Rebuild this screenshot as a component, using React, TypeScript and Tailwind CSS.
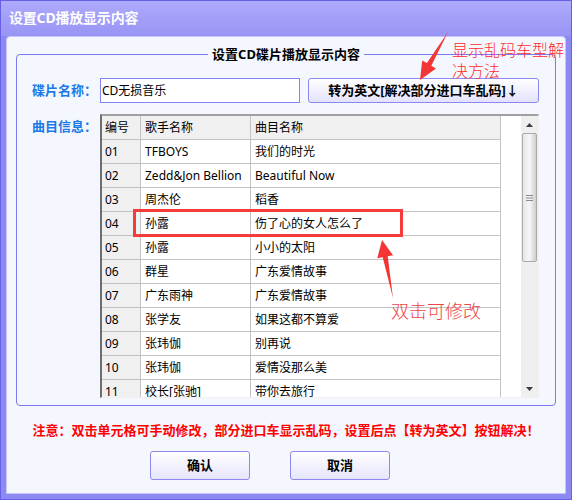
import React from "react";

const rows: [string, string, string][] = [
  ["01", "TFBOYS", "我们的时光"],
  ["02", "Zedd&Jon Bellion", "Beautiful Now"],
  ["03", "周杰伦", "稻香"],
  ["04", "孙露", "伤了心的女人怎么了"],
  ["05", "孙露", "小小的太阳"],
  ["06", "群星", "广东爱情故事"],
  ["07", "广东雨神", "广东爱情故事"],
  ["08", "张学友", "如果这都不算爱"],
  ["09", "张玮伽", "别再说"],
  ["10", "张玮伽", "爱情没那么美"],
  ["11", "校长[张驰]", "带你去旅行"],
];

function Row({ a, b, c, header }: { a: string; b: string; c: string; header?: boolean }) {
  const bg = header ? "bg-[#f0f0f0]" : "bg-white";
  return (
    <div className="flex h-[24px] shrink-0">
      <div className="w-[39px] shrink-0 bg-[#f0f0f0] border-r border-b border-[#c3c3c3] pl-[3px] flex items-center">
        {a}
      </div>
      <div className={`w-[110px] shrink-0 ${bg} border-r border-b border-[#c3c3c3] pl-[4px] flex items-center whitespace-nowrap overflow-hidden`}>
        {b}
      </div>
      <div className={`w-[250px] shrink-0 ${bg} border-r border-b border-[#c3c3c3] pl-[4px] flex items-center whitespace-nowrap`}>
        {c}
      </div>
    </div>
  );
}

export default function App() {
  return (
    <div className="relative w-[572px] h-[500px] overflow-hidden font-['Noto_Sans','Noto_Sans_CJK_SC',sans-serif]">
      <div className="w-full h-full flex flex-col bg-[#8d89f3] border border-[#6561e6]">
        {/* title bar */}
        <div className="h-[35px] shrink-0 bg-gradient-to-b from-[#aeaafc] to-[#9894f4] flex items-center pl-[8px] pb-[2px]">
          <span className="text-white font-bold text-[14px] leading-none tracking-[-0.2px]">设置CD播放显示内容</span>
        </div>
        {/* client */}
        <div className="flex-1 mx-[5px] mb-[5px] bg-[#f4f7fe] border border-[#c6c4fa] rounded-t-[4px] flex flex-col">
          {/* group box */}
          <div className="relative ml-[9px] mt-[17px] w-[540px] h-[352px] border border-[#7c78ef] rounded-[4px] pl-[15px] pr-[16px] pt-[23px] pb-[7px] flex flex-col">
            <span className="absolute left-1/2 -translate-x-1/2 top-[-10px] px-[4px] bg-[#f4f7fe] text-[13px] font-bold leading-[18px] text-black whitespace-nowrap">
              设置CD碟片播放显示内容
            </span>
            {/* row 1 */}
            <div className="flex items-center h-[25px]">
              <div className="w-[68px] shrink-0 text-[13px] font-bold text-[#1a7ae6] whitespace-nowrap">碟片名称：</div>
              <div className="w-[200px] h-[25px] shrink-0 bg-white border border-[#8584f6] flex items-center pl-[1px] text-[12px] text-black">
                CD无损音乐
              </div>
              <div className="ml-[8px] w-[231px] h-[25px] shrink-0 rounded-[3px] border border-[#8c88f0] bg-gradient-to-b from-[#ffffff] to-[#e4e2fb] flex items-center justify-center text-[13px] font-bold text-black whitespace-nowrap">
                转为英文[解决部分进口车乱码]↓
              </div>
            </div>
            {/* row 2 */}
            <div className="flex mt-[11px]">
              <div className="w-[68px] shrink-0 text-[13px] font-bold text-[#1a7ae6] leading-[24px] whitespace-nowrap">曲目信息：</div>
              <div className="w-[439px] h-[284px] shrink-0 flex border-t-2 border-l-2 border-t-[#a0a0a0] border-l-[#6e6e6e] border-r border-b border-r-[#f0f0f0] border-b-[#f0f0f0] bg-white overflow-hidden">
                <div className="w-[419px] shrink-0 flex flex-col overflow-hidden text-[12px] text-black">
                  <Row a="编号" b="歌手名称" c="曲目名称" header />
                  {rows.map((r) => (
                    <Row key={r[0]} a={r[0]} b={r[1]} c={r[2]} />
                  ))}
                </div>
                {/* scrollbar */}
                <div className="w-[17px] shrink-0 bg-[#efefef] flex flex-col items-center">
                  <div className="h-[17px] w-full flex items-center justify-center">
                    <svg width="7" height="4" viewBox="0 0 7 4">
                      <polygon points="3.5,0 7,4 0,4" fill="#3c3c3c" />
                    </svg>
                  </div>
                  <div className="w-[15px] h-[129px] rounded-[2px] border border-[#a9a9a9] bg-gradient-to-r from-[#e6e6e6] via-[#f6f6f6] to-[#cfcfcf] flex items-center justify-center">
                    <svg width="7" height="6" viewBox="0 0 7 6">
                      <rect x="0" y="0" width="7" height="1" fill="#8a8a8a" />
                      <rect x="0" y="2.5" width="7" height="1" fill="#8a8a8a" />
                      <rect x="0" y="5" width="7" height="1" fill="#8a8a8a" />
                    </svg>
                  </div>
                  <div className="flex-1" />
                  <div className="h-[17px] w-full flex items-center justify-center">
                    <svg width="7" height="4" viewBox="0 0 7 4">
                      <polygon points="0,0 7,0 3.5,4" fill="#3c3c3c" />
                    </svg>
                  </div>
                </div>
              </div>
            </div>
          </div>
          {/* note */}
          <div className="mt-[15px] h-[18px] text-center text-[13px] leading-[18px] font-bold text-[#ff0000] whitespace-nowrap">
            注意：双击单元格可手动修改，部分进口车显示乱码，设置后点【转为英文】按钮解决！
          </div>
          {/* buttons */}
          <div className="mt-[12px] flex gap-[40px] pl-[143px]">
            <div className="w-[100px] h-[29px] rounded-[3px] border border-[#8c88f0] bg-gradient-to-b from-[#ffffff] to-[#e6e4fb] flex items-center justify-center text-[13px] font-bold text-black">
              确认
            </div>
            <div className="w-[100px] h-[29px] rounded-[3px] border border-[#8c88f0] bg-gradient-to-b from-[#ffffff] to-[#e6e4fb] flex items-center justify-center text-[13px] font-bold text-black">
              取消
            </div>
          </div>
        </div>
      </div>

      {/* annotations */}
      <div className="absolute left-[133px] top-[209px] w-[270px] h-[28px] border-[3px] border-[#f53b3b] pointer-events-none" />
      <svg className="absolute left-0 top-0 pointer-events-none" width="572" height="500" viewBox="0 0 572 500">
        <polygon
          points="448,32 431.3,65.7 436,68.4 420,80 422.2,60.4 426.9,63.1"
          fill="#f23535"
        />
        <polygon
          points="393,298 387.7,256.2 393,255.2 382,240 377.3,258.2 382.7,257.2"
          fill="#f23535"
        />
      </svg>
      <div className="absolute left-[452px] top-[39px] text-[16px] leading-[21px] text-[#ff2a2a] font-['Noto_Sans_CJK_SC',sans-serif] font-light whitespace-nowrap">
        显示乱码车型解
        <br />
        决方法
      </div>
      <div className="absolute left-[391px] top-[298px] text-[18px] leading-[24px] text-[#f04444] font-['Noto_Sans_CJK_SC',sans-serif] font-light whitespace-nowrap">
        双击可修改
      </div>
    </div>
  );
}
